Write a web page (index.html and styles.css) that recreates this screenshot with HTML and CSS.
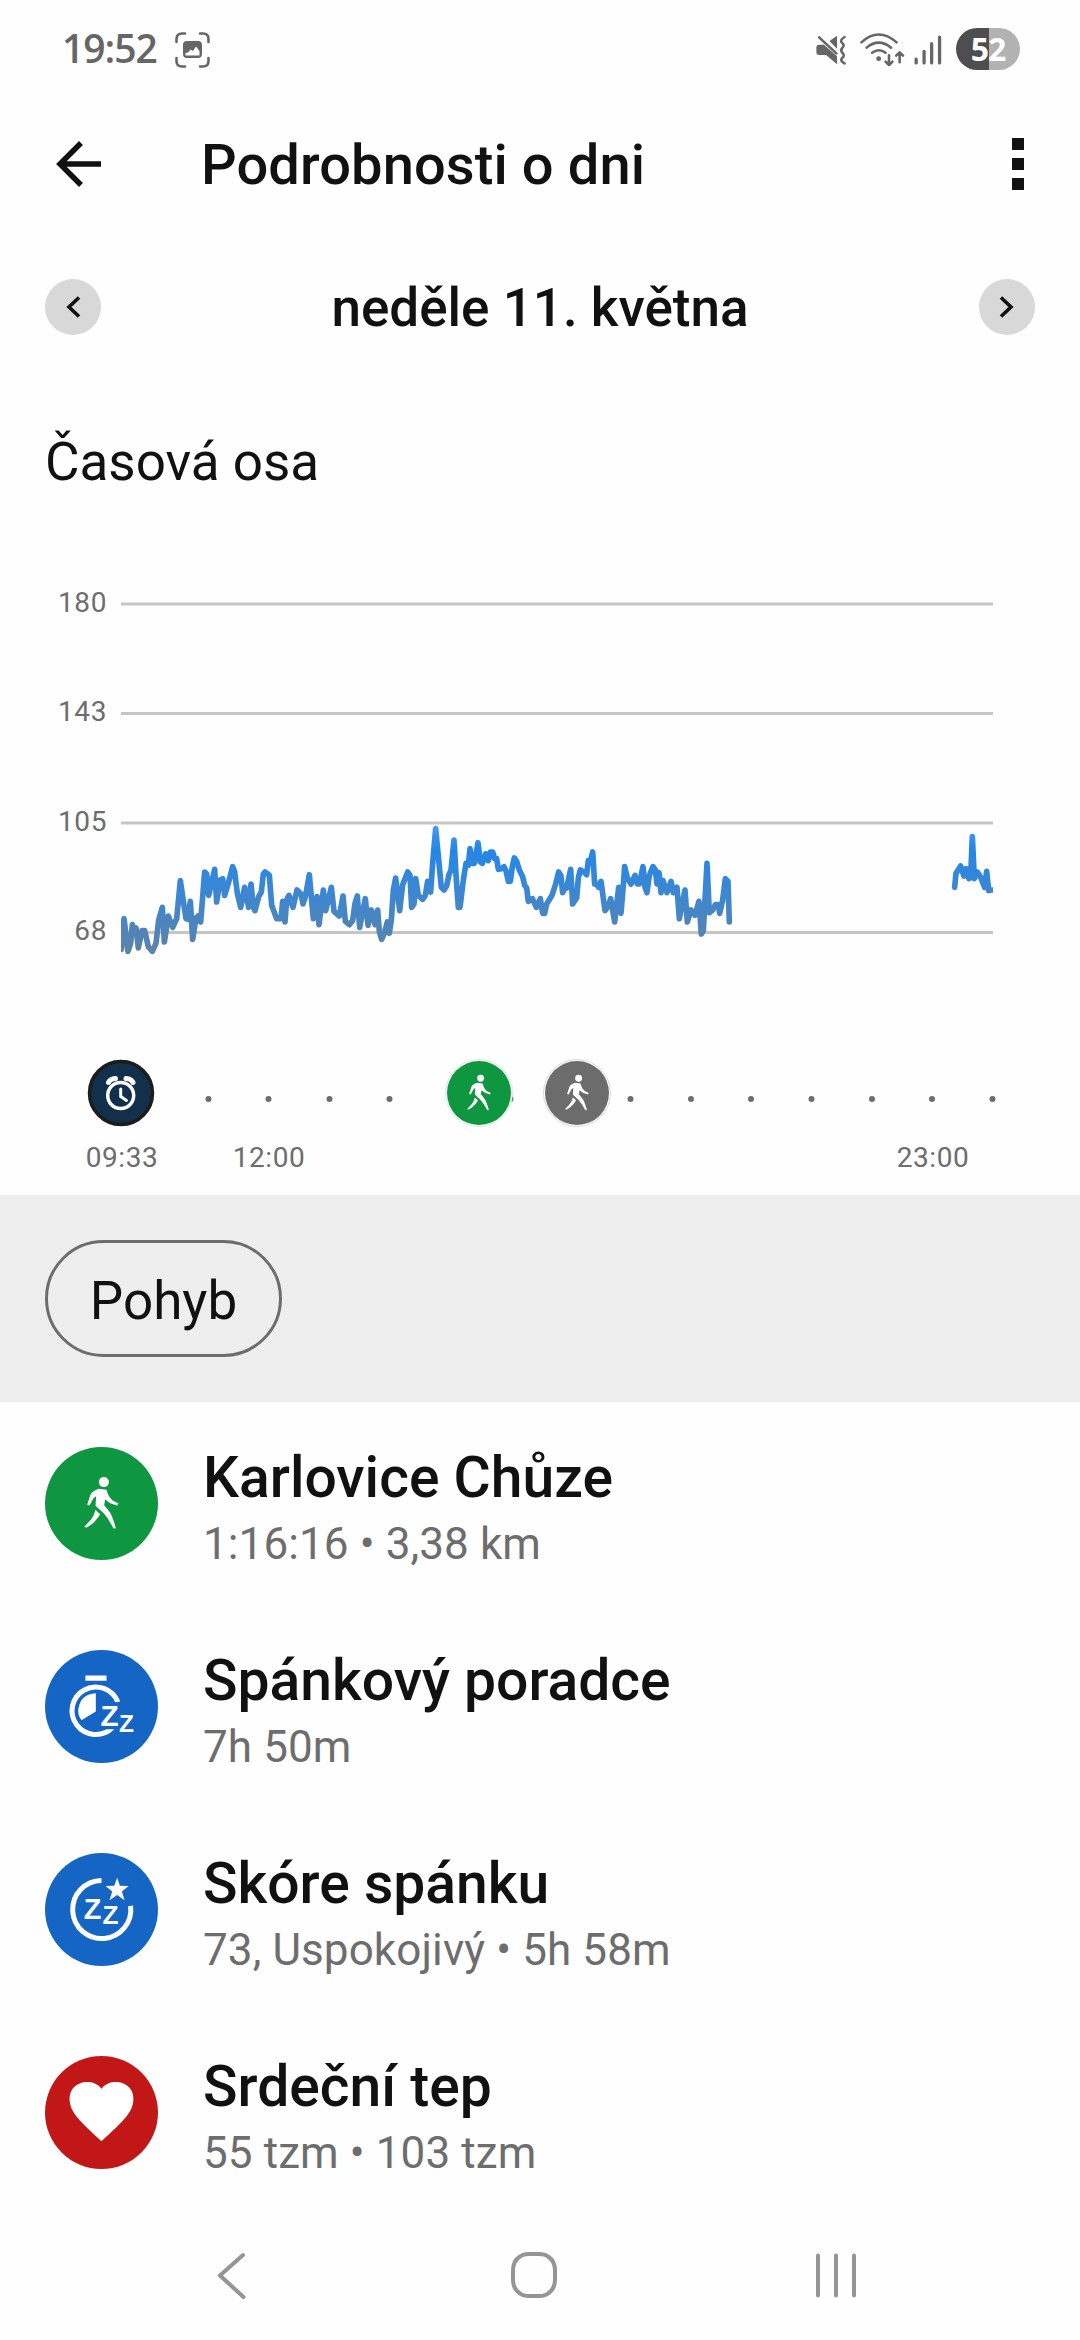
FILE: index.html
```html
<!DOCTYPE html>
<html lang="cs">
<head>
<meta charset="utf-8">
<title>Podrobnosti o dni</title>
<link rel="stylesheet" href="styles.css">
</head>
<body>
<svg class="defs" width="0" height="0" aria-hidden="true">
  <symbol id="walker" viewBox="45 111 338 338">
    <circle cx="221" cy="216" r="15"/>
    <path d="M205 236L229 239Q233 258 247 271L265 280L261 286L240 279L225 268L222 285Q234 299 240 308Q248 322 257 354L250 355Q237 329 222 311L196 287L198 258L190 264L178 286L171 284L181 254Q184 245 205 236Z"/>
    <path d="M196 299L210 312Q197 332 186 341L170 352L162 350L183 328Q193 314 196 299Z"/>
  </symbol>
</svg>
<div class="screen">
  <div class="status">
    <span class="clock">19:52</span>
    <svg class="capture" viewBox="0 0 35 36" width="35" height="36">
      <path class="line" d="M1.5 10V7Q1.500 1.500 7 1.500H10M25 1.500H28Q33.500 1.500 33.500 7V10M33.500 26V29Q33.500 34.500 28 34.500H25M10 34.500H7Q1.500 34.500 1.500 29V26"/>
      <path class="solid" fill-rule="evenodd" d="M12 9H23Q27 9 27 13V22Q27 26 23 26H12Q8 26 8 22V13Q8 9 12 9ZM10.500 23.500H24.500V19L21 14.500L18 19L15.500 17.500L13 20.500L10.500 21Z"/>
    </svg>
    <svg class="signals" viewBox="800 95 372 105" width="128" height="35" preserveAspectRatio="none">
      <path class="solid" d="M812 133H826L864 168V192L832 164H812Q804 164 804 156V141Q804 133 812 133ZM842 122L864 106V145Z"/>
      <path class="line w7" d="M812 111L862 159M886 110Q870 120 879 128Q887 134 880 142Q872 150 880 158Q888 165 879 173Q871 181 886 189"/>
      <path class="line w7" d="M935 126Q985 79 1037 126M950 142Q985 112 1021 142M966 157Q986 142 1005 157"/>
      <circle class="solid" cx="985" cy="175" r="7"/>
      <path class="line w7" d="M1015 165V193M1005 184L1015 194L1025 184M1046 186V157M1036 166L1046 156L1056 166"/>
      <path class="line w9" d="M1094 176V188M1117 153V188M1139 130V188M1162 110V188"/>
    </svg>
    <span class="battery">52</span>
  </div>

  <header class="appbar">
    <svg viewBox="0 0 46 46" width="46" height="46"><path d="M25 2L4 23L25 44M4 23H45" fill="none" stroke="#111" stroke-width="5.500"/></svg>
    <h1>Podrobnosti o dni</h1>
    <div class="more"><i></i><i></i><i></i></div>
  </header>

  <div class="datebar">
    <button class="step"><svg viewBox="0 0 56 56" width="56" height="56"><path d="M34 18.500L24 28L34 37.500"/></svg></button>
    <h2>neděle 11. května</h2>
    <button class="step"><svg viewBox="0 0 56 56" width="56" height="56"><path d="M22 18.500L32 28L22 37.500"/></svg></button>
  </div>

  <h3 class="section">Časová osa</h3>

  <svg class="chart" viewBox="0 540 1080 655" width="1080" height="655">
    <defs>
      <linearGradient id="pulse" gradientUnits="userSpaceOnUse" x1="0" y1="80" x2="0" y2="460">
        <stop offset="0" stop-color="#429af2"/><stop offset=".18" stop-color="#2586e7"/><stop offset=".5" stop-color="#3b87d4"/><stop offset="1" stop-color="#5c83a8"/>
      </linearGradient>
      <clipPath id="plot"><rect x="121" y="590" width="872" height="400"/></clipPath>
    </defs>
    <path class="grid" d="M121 604H993M121 713.500H993M121 823H993M121 932.500H993"/>
    <g class="axis" text-anchor="end">
      <text x="107" y="612">180</text><text x="107" y="721">143</text><text x="107" y="831">105</text><text x="107" y="940">68</text>
    </g>
    <g clip-path="url(#plot)">
      <g class="pulse" transform="translate(100 800) scale(.33333)">
        <polyline points="64,448 72,356 84,454 92,430 97,374 104,400 108,384 115,444 126,392 134,392 145,440 157,454 168,430 176,360 187,322 193,426 205,348 218,382 230,356 241,242 258,356 264,358 271,304 278,418 288,354 294,348 302,366 314,216 320,222 326,286 344,208 350,306 360,240 368,236 374,286 386,246 398,200 404,216 412,280 422,322 434,262 446,322 453,252 460,322 465,332 476,290 484,276 490,222 495,216 508,226 515,316 530,356 543,356 548,304 555,366 560,300 567,286 579,322 591,270 603,282 609,312 616,290 628,224 640,356 651,290 657,374 670,270 677,332 694,262 702,334 718,348 729,288 736,364 748,374 758,362 765,310 772,288 779,382 796,296 804,376 814,330 825,374 833,330 838,394 845,418 853,400 862,366 868,400 874,360 880,270 887,234 899,332 908,254 923,216 930,226 935,322 942,312 947,236 955,286 968,298 976,286 983,244 992,276 998,190 1007,86 1017,190 1024,262 1032,270 1040,258 1047,224 1053,210 1062,120 1069,240 1075,322 1080,322 1090,240 1098,190 1105,196 1110,146 1116,190 1123,190 1134,128 1141,186 1147,190 1157,162 1165,182 1171,156 1178,156 1184,176 1190,176 1195,208 1204,206 1212,200 1218,212 1225,244 1231,244 1237,200 1243,174 1250,184 1258,210 1268,230 1274,256 1280,264 1285,304 1297,296 1309,322 1321,296 1328,340 1334,340 1340,312 1356,286 1367,252 1376,216 1383,228 1388,278 1395,262 1400,264 1412,208 1418,312 1430,294 1435,234 1441,210 1452,216 1460,224 1465,182 1472,182 1478,156 1484,252 1490,252 1496,262 1503,244 1508,280 1515,332 1525,318 1532,296 1544,366 1556,262 1563,340 1568,280 1574,200 1582,234 1593,252 1605,226 1612,252 1618,252 1629,200 1635,262 1641,278 1648,226 1659,200 1666,210 1671,252 1677,218 1683,278 1689,242 1701,278 1713,244 1720,278 1731,262 1738,356 1755,270 1762,366 1773,330 1785,346 1797,304 1804,402 1810,392 1821,190 1828,338 1838,330 1846,314 1855,314 1859,340 1868,300 1876,236 1884,244 1888,366"/>
        <polyline points="2564,262 2568,220 2582,198 2592,228 2599,206 2607,236 2612,230 2617,110 2623,236 2632,216 2642,232 2654,262 2660,214 2666,272 2672,270 2685,270"/>
      </g>
    </g>
    <g class="dots">
      <circle cx="208.500" cy="1099" r="3"/><circle cx="268.500" cy="1099" r="3"/><circle cx="329.500" cy="1099" r="3"/><circle cx="389.500" cy="1099" r="3"/><circle cx="510.500" cy="1099" r="3"/><circle cx="630.500" cy="1099" r="3"/><circle cx="691" cy="1099" r="3"/><circle cx="751" cy="1099" r="3"/><circle cx="811.500" cy="1099" r="3"/><circle cx="872" cy="1099" r="3"/><circle cx="932" cy="1099" r="3"/><circle cx="992.500" cy="1099" r="3"/>
    </g>
    <circle cx="121" cy="1093" r="31.500" fill="#12304c" stroke="#1c1c1c" stroke-width="3.500"/>
    <g fill="none" stroke="#fff" stroke-linecap="round">
      <circle cx="120.700" cy="1095.500" r="13" stroke-width="3.500"/>
      <path d="M120.700 1089V1096.500L126.500 1100.500" stroke-width="3"/>
      <path d="M108.500 1082.500Q110 1079 115.500 1078.500M133 1082.500Q131.500 1079 126 1078.500" stroke-width="5"/>
    </g>
    <circle cx="479" cy="1093" r="33.500" fill="#fff" stroke="#bfe3ca" stroke-width=".7"/><circle cx="479" cy="1093" r="32" fill="#0e9640"/>
    <circle cx="577" cy="1093" r="33.500" fill="#fff" stroke="#c9c9c9" stroke-width=".7"/><circle cx="577" cy="1093" r="32" fill="#6c6c6c"/>
    <use href="#walker" x="440" y="1054" width="78" height="78" fill="#fff"/>
    <use href="#walker" x="538" y="1054" width="78" height="78" fill="#fff"/>
    <g class="axis" text-anchor="middle"><text x="122" y="1167">09:33</text><text x="269" y="1167">12:00</text><text x="933" y="1167">23:00</text></g>
  </svg>

  <div class="filters"><button class="chip">Pohyb</button></div>

  <ul class="list">
    <li>
      <span class="badge green"><svg viewBox="0 0 338 338"><use href="#walker" width="338" height="338" fill="#fff"/></svg></span>
      <div><h4>Karlovice Chůze</h4><p>1:16:16 • 3,38 km</p></div>
    </li>
    <li>
      <span class="badge blue"><svg viewBox="45 720 338 338">
        <path d="M166 796H229V812H166Z" fill="#fff"/>
        <path d="M263 876A71 71 0 1 0 246 953" fill="none" stroke="#fff" stroke-width="15"/>
        <path d="M197 849V904L154 930Q142 914 145 895Q152 851 197 849Z" fill="#fff"/>
        <path d="M211 876H278V904H315V970H264V957H211Z" fill="#1465c4"/>
        <text x="211" y="948" font-size="89">Z</text><text x="266" y="965" font-size="73">Z</text>
      </svg></span>
      <div><h4>Spánkový poradce</h4><p>7h 50m</p></div>
    </li>
    <li>
      <span class="badge blue"><svg viewBox="45 99 338 338">
        <path d="M214 181A87 87 0 1 0 301 257" fill="none" stroke="#fff" stroke-width="15"/>
        <path d="M261 173L269 197L295 198L275 214L283 240L261 225L238 240L246 214L226 198L252 197Z" fill="#fff"/>
        <text x="161" y="296" font-size="86">Z</text><text x="217" y="312" font-size="78">Z</text>
      </svg></span>
      <div><h4>Skóre spánku</h4><p>73, Uspokojivý • 5h 58m</p></div>
    </li>
    <li>
      <span class="badge red"><svg viewBox="45 708 338 338"><path d="M214 806C232 783 260 783 279 790C306 800 313 826 308 850C302 880 280 902 214 963C148 902 126 880 120 850C115 826 122 800 149 790C168 783 196 783 214 806Z" fill="#fff"/></svg></span>
      <div><h4>Srdeční tep</h4><p>55 tzm • 103 tzm</p></div>
    </li>
  </ul>

  <nav class="navbar">
    <svg viewBox="0 0 30 48" width="30" height="48"><path d="M26 4L3 24.500L26.500 46"/></svg>
    <svg viewBox="0 0 48 48" width="48" height="48"><path d="M19 3H29Q35 3 38 5.500Q45 10 45 19V29Q45 38 38 42.500Q35 45 29 45H19Q13 45 10 42.500Q3 38 3 29V19Q3 10 10 5.500Q13 3 19 3Z"/></svg>
    <svg viewBox="0 0 44 48" width="44" height="48"><path d="M4 4.500V44.500M22 4.500V44.500M40 4.500V44.500"/></svg>
  </nav>
</div>
</body>
</html>
```
FILE: styles.css
```css
* { box-sizing: border-box; margin: 0; padding: 0; }
body { background: #fefefe; color: #111; font-family: Roboto, "Noto Sans", sans-serif; }
button { border: 0; background: none; font: inherit; color: inherit; }
.defs { display: block; height: 0; }
.screen { width: 1080px; height: 2340px; display: flex; flex-direction: column; overflow: hidden; }

.status { height: 98px; padding: 0 60px 0 62px; display: flex; align-items: center; color: #666; }
.clock { font-family: "Open Sans", sans-serif; font-size: 39px; font-weight: 600; width: 113px; letter-spacing: -1px; margin-top: -3px; }
.status svg { display: block; margin-top: 2px; }
.status .signals { margin: 0 13px 0 auto; }
.line { fill: none; stroke: #666; stroke-width: 2.6; stroke-linecap: round; stroke-linejoin: round; }
.w7 { stroke-width: 7.5; }
.w9 { stroke-width: 9.5; }
.solid { fill: #666; }
.battery { width: 64px; height: 42px; border-radius: 21px; background: linear-gradient(90deg, #4e4e4e 33px, #b2b2b2 33px); color: #fff; font: 700 32px/41px "Open Sans", sans-serif; text-align: center; letter-spacing: -1px; }

.appbar { height: 132px; padding: 0 56px; display: flex; align-items: center; }
.appbar svg, .more { margin-top: -1px; }
.appbar h1 { font-size: 56px; font-weight: 500; line-height: 66px; letter-spacing: .1px; margin: 2px auto 0 99px; }
.more { display: flex; flex-direction: column; gap: 8px; }
.more i { width: 12px; height: 12px; background: #111; }

.datebar { height: 154px; padding: 0 45px; display: flex; align-items: center; justify-content: space-between; }
.datebar h2 { font-size: 53px; font-weight: 500; line-height: 62px; margin-top: 2px; }
.step { width: 56px; height: 56px; border-radius: 50%; background: #d8d8d8; }
.step svg { display: block; fill: none; stroke: #111; stroke-width: 3.6; }

.section { height: 156px; padding: 46px 45px 0; font-size: 53px; font-weight: 400; line-height: 64px; }

.chart { display: block; flex: none; }
.grid { stroke: #c5c5c5; stroke-width: 3; }
.axis { font-size: 28px; fill: #6d6d6d; letter-spacing: .6px; }
.pulse { fill: none; stroke: url(#pulse); stroke-width: 17; stroke-linecap: round; stroke-linejoin: round; }
.dots { fill: #6d6d6d; }

.filters { height: 207px; padding: 45px; background: #eee; display: flex; flex: none; }
.chip { width: 237px; height: 117px; border: 3px solid #6d6d6d; border-radius: 59px; font-size: 53px; padding-top: 4px; }

.list { list-style: none; flex: none; }
.list li { height: 203px; padding: 0 45px; display: flex; align-items: center; gap: 45px; }
.badge { width: 113px; height: 113px; border-radius: 50%; overflow: hidden; }
.badge svg { display: block; width: 113px; height: 113px; }
.badge text { font-family: "Liberation Sans", sans-serif; font-weight: 700; fill: #fff; }
.green { background: #0e9640; }
.blue { background: #1465c4; }
.red { background: #c11717; }
.list h4 { font-size: 57px; font-weight: 500; line-height: 67px; margin-top: 7px; }
.list p { font-size: 44px; line-height: 52px; letter-spacing: .1px; margin-top: 7px; color: #6d6d6d; }

.navbar { flex: 1; padding: 0 222px 5px 217px; display: grid; grid-template-columns: 293px 1fr auto; align-items: center; }
.navbar svg { display: block; fill: none; stroke: #959595; stroke-width: 4; stroke-linecap: round; stroke-linejoin: round; }
```
